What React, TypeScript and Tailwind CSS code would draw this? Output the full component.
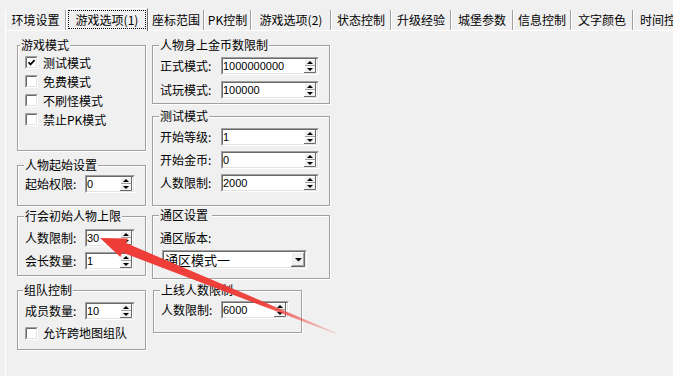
import React from "react";

const CJK = "font-['Noto_Sans_CJK_SC','Noto_Sans',sans-serif]";

function SpinBtn() {
  return (
    <svg width="12" height="14" viewBox="0 0 12 14" className="block shrink-0">
      <rect width="12" height="14" fill="#f0f0f0" />
      <path d="M0.5 13V0.5H11" stroke="#ffffff" fill="none" />
      <path d="M0 13.5H11.5V0" stroke="#696969" fill="none" />
      <path d="M1 6.5H11" stroke="#a0a0a0" />
      <path d="M1 7.5H11" stroke="#ffffff" />
      <polygon points="3,5 9,5 6,2" fill="#000" />
      <polygon points="3,9 9,9 6,12" fill="#000" />
    </svg>
  );
}

function DropBtn() {
  return (
    <svg width="14" height="15" viewBox="0 0 14 15" className="block shrink-0">
      <rect width="14" height="15" fill="#f0f0f0" />
      <path d="M0.5 14V0.5H13" stroke="#ffffff" fill="none" />
      <path d="M0 14.5H13.5V0" stroke="#696969" fill="none" />
      <path d="M1 13.5H12.5V1" stroke="#a0a0a0" fill="none" />
      <polygon points="4,6 11,6 7.5,9.5" fill="#000" />
    </svg>
  );
}

function Check({ checked }: { checked?: boolean }) {
  return (
    <svg width="13" height="13" viewBox="0 0 13 13" className="block shrink-0">
      <rect width="13" height="13" fill="#ffffff" />
      <path d="M0.5 12.5V0.5H12.5" stroke="#a0a0a0" fill="none" />
      <path d="M1.5 11.5V1.5H11.5" stroke="#696969" fill="none" />
      <path d="M1 12.5H12.5V1" stroke="#ffffff" fill="none" />
      <path d="M2 11.5H11.5V2" stroke="#e3e3e3" fill="none" />
      {checked && (
        <path d="M3.5 6.2L5.5 8.4L9.6 4.2" stroke="#000" strokeWidth="1.7" fill="none" />
      )}
    </svg>
  );
}

function SpinEdit({ value, w }: { value: string; w: string }) {
  return (
    <div
      className={`${w} h-[18px] flex border border-t-[#a0a0a0] border-l-[#a0a0a0] border-r-white border-b-white bg-white`}
    >
      <div className="flex-1 min-w-0 flex items-center border border-t-[#696969] border-l-[#696969] border-r-[#e3e3e3] border-b-[#e3e3e3]">
        <span className="text-[11px] leading-none font-['Liberation_Sans',sans-serif] text-black">
          {value}
        </span>
        <div className="ml-auto mr-[1px]">
          <SpinBtn />
        </div>
      </div>
    </div>
  );
}

function Select() {
  return (
    <div className="ml-[2px] mt-[5px] w-[145px] h-[19px] flex border border-t-[#a0a0a0] border-l-[#a0a0a0] border-r-white border-b-white bg-white">
      <div className="flex-1 min-w-0 flex items-center border border-t-[#696969] border-l-[#696969] border-r-[#e3e3e3] border-b-[#e3e3e3]">
        <span className="pl-[1px] text-[13px] leading-none">通区模式一</span>
        <div className="ml-auto">
          <DropBtn />
        </div>
      </div>
    </div>
  );
}

function Group({
  label,
  labelLeft,
  className,
  children,
}: {
  label: string;
  labelLeft: string;
  className: string;
  children: React.ReactNode;
}) {
  return (
    <div
      className={`relative border border-[#a0a0a0] shadow-[inset_1px_1px_0_#ffffff,1px_1px_0_#ffffff] ${className}`}
    >
      <span
        className={`absolute top-[-8px] ${labelLeft} bg-[#f0f0f0] px-[1px] leading-[14px] whitespace-pre`}
      >
        {label}
      </span>
      {children}
    </div>
  );
}

function Row({
  label,
  lw,
  className = "",
  children,
}: {
  label: string;
  lw: string;
  className?: string;
  children: React.ReactNode;
}) {
  return (
    <div className={`flex items-center ${className}`}>
      <span className={`${lw} leading-[14px] whitespace-nowrap`}>{label}</span>
      {children}
    </div>
  );
}

const tabs: { t: string; w: string; sel?: boolean }[] = [
  { t: "环境设置", w: "w-[61px]" },
  { t: "游戏选项(1)", w: "w-[82px]", sel: true },
  { t: "座标范围", w: "w-[56px]" },
  { t: "PK控制", w: "w-[47px]" },
  { t: "游戏选项(2)", w: "w-[80px]" },
  { t: "状态控制", w: "w-[60px]" },
  { t: "升级经验", w: "w-[60px]" },
  { t: "城堡参数", w: "w-[62px]" },
  { t: "信息控制", w: "w-[58px]" },
  { t: "文字颜色", w: "w-[62px]" },
  { t: "时间控制", w: "w-[62px]" },
];

export default function App() {
  return (
    <div
      className={`relative w-[673px] h-[376px] overflow-hidden bg-[#f0f0f0] text-[12px] text-black ${CJK}`}
    >
      {/* tab strip */}
      <div className="flex h-[30px] pl-[5px] items-start">
        {tabs.map((tab) =>
          tab.sel ? (
            <div
              key={tab.t}
              className={`${tab.w} shrink-0 relative z-10 mt-[8px] h-[23px] bg-[#f0f0f0] border-l border-t border-white border-r border-r-[#696969] pt-[1px] px-[1px]`}
            >
              <div className="h-[19px] border border-dotted border-black flex items-center justify-center leading-[14px] whitespace-nowrap">
                {tab.t}
              </div>
            </div>
          ) : (
            <div
              key={tab.t}
              className={`${tab.w} shrink-0 mt-[10px] h-[20px] flex items-center justify-center border-l border-white border-r border-r-[#a0a0a0] leading-[14px] whitespace-nowrap`}
            >
              {tab.t}
            </div>
          )
        )}
      </div>

      {/* tab page */}
      <div className="ml-[5px] h-[346px] border-t border-l border-white pl-[11px] pt-[14px] flex gap-[6px]">
        {/* left column */}
        <div className="w-[129px] shrink-0 flex flex-col">
          <Group label="游戏模式" labelLeft="left-[2px]" className="h-[106px] pt-[7px] pl-[7px]">
            {[
              { t: "测试模式", c: true },
              { t: "免费模式" },
              { t: "不刷怪模式" },
              { t: "禁止PK模式" },
            ].map((r) => (
              <div key={r.t} className="h-[19px] flex items-center gap-[5px]">
                <Check checked={r.c} />
                <span className="leading-[14px]">{r.t}</span>
              </div>
            ))}
          </Group>
          <Group
            label="人物起始设置"
            labelLeft="left-[6px]"
            className="mt-[14px] h-[41px] pt-[9px] pl-[7px]"
          >
            <Row label="起始权限:" lw="w-[60px]">
              <SpinEdit value="0" w="w-[50px]" />
            </Row>
          </Group>
          <Group
            label="行会初始人物上限"
            labelLeft="left-[6px]"
            className="mt-[10px] h-[60px] pt-[12px] pl-[7px]"
          >
            <Row label="人数限制:" lw="w-[60px]">
              <SpinEdit value="30" w="w-[50px]" />
            </Row>
            <Row label="会长数量:" lw="w-[60px]" className="mt-[5px]">
              <SpinEdit value="1" w="w-[50px]" />
            </Row>
          </Group>
          <Group
            label="组队控制"
            labelLeft="left-[5px]"
            className="mt-[14px] h-[60px] pt-[11px] pl-[7px]"
          >
            <Row label="成员数量:" lw="w-[60px]">
              <SpinEdit value="10" w="w-[50px]" />
            </Row>
            <div className="mt-[6px] flex items-center gap-[5px]">
              <Check />
              <span className="leading-[14px]">允许跨地图组队</span>
            </div>
          </Group>
        </div>

        {/* right column */}
        <div className="w-[178px] shrink-0 flex flex-col">
          <Group
            label="人物身上金币数限制"
            labelLeft="left-[6px]"
            className="h-[59px] pt-[11px] pl-[7px]"
          >
            <Row label="正式模式:" lw="w-[61px]">
              <SpinEdit value="1000000000" w="w-[98px]" />
            </Row>
            <Row label="试玩模式:" lw="w-[61px]" className="mt-[6px]">
              <SpinEdit value="100000" w="w-[98px]" />
            </Row>
          </Group>
          <Group
            label="测试模式"
            labelLeft="left-[6px]"
            className="mt-[12px] h-[90px] pt-[11px] pl-[7px]"
          >
            <Row label="开始等级:" lw="w-[61px]">
              <SpinEdit value="1" w="w-[98px]" />
            </Row>
            <Row label="开始金币:" lw="w-[61px]" className="mt-[5px]">
              <SpinEdit value="0" w="w-[98px]" />
            </Row>
            <Row label="人数限制:" lw="w-[61px]" className="mt-[5px]">
              <SpinEdit value="2000" w="w-[98px]" />
            </Row>
          </Group>
          <Group
            label="通区设置 "
            labelLeft="left-[6px]"
            className="mt-[9px] h-[64px] pt-[15px] pl-[7px]"
          >
            <div className="leading-[14px]">通区版本:</div>
            <Select />
          </Group>
          <Group
            label="上线人数限制"
            labelLeft="left-[6px]"
            className="mt-[11px] ml-[1px] w-[149px] h-[43px] pt-[10px] pl-[7px]"
          >
            <Row label="人数限制:" lw="w-[60px]">
              <SpinEdit value="6000" w="w-[68px]" />
            </Row>
          </Group>
        </div>
      </div>

      {/* red annotation arrow */}
      <svg
        className="absolute left-0 top-0 pointer-events-none"
        width="673"
        height="376"
        viewBox="0 0 673 376"
      >
        <defs>
          <linearGradient
            id="ag"
            gradientUnits="userSpaceOnUse"
            x1="100"
            y1="238"
            x2="335"
            y2="333"
          >
            <stop offset="0" stopColor="#ef3b36" stopOpacity="1" />
            <stop offset="0.7" stopColor="#ef3b36" stopOpacity="0.95" />
            <stop offset="1" stopColor="#ef3b36" stopOpacity="0.15" />
          </linearGradient>
        </defs>
        <polygon
          points="100,238 127.85,238.5 126,243.1 335.3,332.4 334.7,333.6 122.2,252.4 120.35,257"
          fill="url(#ag)"
        />
      </svg>
    </div>
  );
}
